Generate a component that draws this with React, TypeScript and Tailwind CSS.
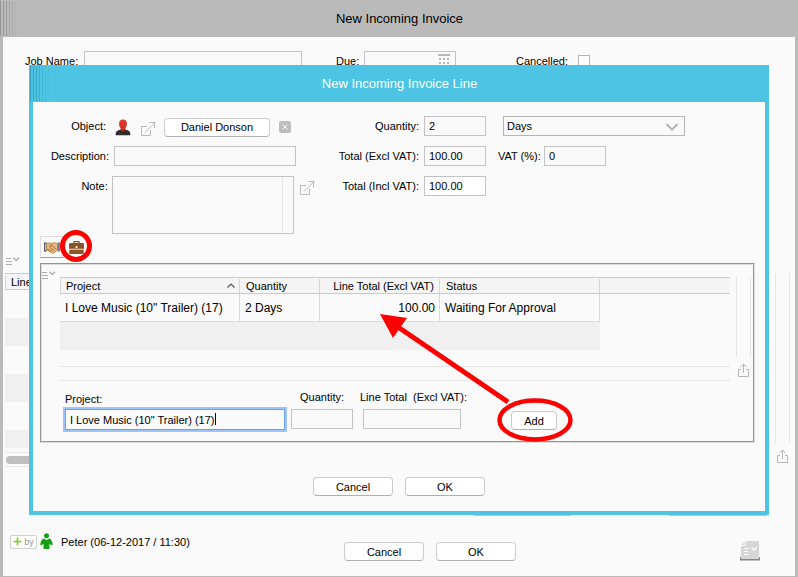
import { ReactNode } from "react";

type IconProps = {
  className?: string;
};

type ColumnProps = {
  id: string;
  label: string;
  className: string;
  children: ReactNode;
};

const field =
  "h-5 border border-[#c3c3c3] bg-[#fafafa] px-1 text-[11px] leading-4 outline-none";

const macButton =
  "h-[19px] rounded border border-[#cbcbcb] border-b-[#b0b0b0] bg-white text-center text-[11px] leading-4";

const headCell =
  "h-[17px] border-y border-[#cacaca] bg-[#f5f5f5] p-0 font-normal leading-[14px]";

const bodyCell = "border-r border-b border-[#dadada] p-0";

const GripLines = ({ color }: { color: string }) => {
  const opacities = [
    "opacity-100",
    "opacity-90",
    "opacity-80",
    "opacity-60",
    "opacity-40",
    "opacity-20",
    "opacity-10",
  ];

  return (
    <div className="absolute top-px left-0 flex h-[35px] gap-0.5">
      {opacities.map((opacity) => (
        <span key={opacity} className={`w-px ${color} ${opacity}`} />
      ))}
    </div>
  );
};

const ListMenuIcon = () => (
  <svg width="14" height="9" viewBox="0 0 14 9" fill="none" stroke="#adadad">
    <path d="M0 1.500h5M0 4.500h6M0 7.500h6" />
    <path d="M7.500 .7L10.300 3.500 13.100 .7" strokeWidth="1.400" />
  </svg>
);

const ShareIcon = () => (
  <svg width="12" height="15" viewBox="0 0 12 15" fill="none" stroke="#b5b5b5">
    <path d="M3 6.500H.5v7h10v-7H8" />
    <path d="M5.500 10V1M2.500 4l3-3 3 3" />
  </svg>
);

const OpenIcon = ({ className }: IconProps) => (
  <svg
    className={className}
    width="15"
    height="15"
    viewBox="0 0 15 15"
    fill="none"
    stroke="#b9b9b9"
  >
    <path d="M6 4.500H.5v9h9V8" />
    <path d="M4 10.500L14 .5M8.500 .5H14.500M13.500 .5v6" />
  </svg>
);

const ContactIcon = () => (
  <svg width="16" height="17" viewBox="0 0 16 17">
    <path
      d="M.7 16.200c-.3-3 .8-4.700 4.800-5.700h5c4 1 5.100 2.700 4.800 5.700z"
      fill="#2e2e2e"
    />
    <path d="M5.800 9h4.400v2.200L8 12.800l-2.200-1.600z" fill="#b5221a" />
    <path
      d="M8 .4c2.700 0 4.100 1.700 4 4.300-.1 2.800-1.700 5.700-4 5.700S4.100 7.500 4 4.700C3.900 2.100 5.300.4 8 .4z"
      fill="#dc3a2c"
    />
    <path d="M5.600 5h1.500M8.900 5h1.500M7 8h2" stroke="#9c2018" strokeWidth=".8" />
  </svg>
);

const HandshakeIcon = () => (
  <svg width="16" height="13" viewBox="0 0 16 13">
    <path d="M0 1.500h2.500v9H0z" fill="#30364a" />
    <path d="M.8 2.500h1v7h-1z" fill="#dfe4ee" />
    <path d="M13.500 1.500H16v9h-2.500z" fill="#7b7f8c" />
    <path
      d="M2.500 2.500L5.500 1.800l2.300.8 2.500-1 3.200 1v6.200l-2.800 2.600-2 .8-3.400-1.700-2.800-1.700z"
      fill="#e7b77b"
      stroke="#a8743d"
      strokeWidth=".7"
    />
    <path
      d="M8 2.800L5.300 5.500c1.200 1 2.400.3 3.200-.7l4 3.700M7.500 7l2.800 3M5.500 7.800l2.500 2.700M3.500 8l2 2"
      fill="none"
      stroke="#99632e"
      strokeWidth=".8"
    />
  </svg>
);

const BriefcaseIcon = () => (
  <svg width="15" height="13" viewBox="0 0 15 13">
    <path d="M5 2.500V.7h5v1.800" fill="none" stroke="#8a5426" strokeWidth="1.200" />
    <path d="M1 2h13l1 1v4.800H0V3z" fill="#8a5426" />
    <path d="M.3 8.600h14.400V13H.3z" fill="#8a5426" />
    <path d="M6.500 5.300h2v1.700h-2z" fill="#fff" />
  </svg>
);

const UserIcon = () => (
  <svg width="13" height="17" viewBox="0 0 13 17" fill="#16a016">
    <circle cx="6.500" cy="2.800" r="2.500" />
    <path d="M3.500 5.500L6.500 7l3-1.500c1.800.6 2.800 3.300 3.400 6.300l-1.500.5-1.900-1.500V16h-6v-5.200l-1.900 1.500-1.500-.5c.6-3 1.600-5.700 3.400-6.300z" />
  </svg>
);

const CalendarIcon = ({ className }: IconProps) => (
  <svg className={className} width="12" height="11" viewBox="0 0 12 11" fill="#b9b9b9">
    <path d="M0 0h12v2H0zM1 4h2v2H1zM5 4h2v2H5zM9 4h2v2H9zM1 8h2v2H1zM5 8h2v2H5zM9 8h2v2H9z" />
  </svg>
);

const ReportIcon = () => (
  <svg width="20" height="20" viewBox="0 0 20 20" fill="none">
    <path d="M6 0h13v18H1V5h5z" fill="#d6d6d6" />
    <path d="M1.500 4L5 .5V4z" fill="#d6d6d6" />
    <path d="M0 16v3.500h20V16h-1v2H1v-2z" fill="#858585" />
    <path d="M4 7.500h5M4 10.500h4M4 13.500h5" stroke="#fff" />
    <path d="M11.500 6.500l2.500 2.500 2.500-2.500" stroke="#fff" strokeWidth="1.500" />
  </svg>
);

const LineColumn = ({ id, label, className, children }: ColumnProps) => (
  <div className={`flex flex-col gap-1 self-start ${className}`}>
    <label htmlFor={id} className="h-3.5 leading-3 whitespace-pre">
      {label}
    </label>
    {children}
  </div>
);

const LinesTable = () => (
  <table className="w-full table-fixed border-separate border-spacing-0 text-left">
    <colgroup>
      <col className="w-[180px]" />
      <col className="w-20" />
      <col className="w-[120px]" />
      <col className="w-40" />
      <col />
    </colgroup>
    <thead>
      <tr>
        <th className={headCell}>
          <div className="flex items-center justify-between border-x border-[#d6d6d6] pr-1 pl-[5px]">
            Project
            <svg width="8" height="5" viewBox="0 0 8 5" fill="none" stroke="#555">
              <path d="M.5 4.500L4 1l3.500 3.500" strokeWidth="1.200" />
            </svg>
          </div>
        </th>
        <th className={headCell}>
          <div className="border-r border-[#d6d6d6] pl-1.5">Quantity</div>
        </th>
        <th className={headCell}>
          <div className="border-r border-[#d6d6d6] pr-[5px] text-right whitespace-nowrap">
            Line Total (Excl VAT)
          </div>
        </th>
        <th className={headCell}>
          <div className="border-r border-[#d6d6d6] pl-1.5">Status</div>
        </th>
        <td className={headCell} />
      </tr>
    </thead>
    <tbody>
      <tr className="h-7 text-xs">
        <td className={`${bodyCell} pl-[5px] whitespace-nowrap`}>
          I Love Music (10&quot; Trailer) (17)
        </td>
        <td className={`${bodyCell} pl-[5px]`}>2 Days</td>
        <td className={`${bodyCell} pr-1 text-right`}>100.00</td>
        <td className={`${bodyCell} pl-[5px]`}>Waiting For Approval</td>
        <td />
      </tr>
      <tr className="h-7">
        <td colSpan={4} className="bg-[#f0f0f0]" />
        <td />
      </tr>
    </tbody>
  </table>
);

const LinesPanel = () => (
  <div className="relative mt-[5px] mr-2.5 ml-[7px] border border-t-[#959595] border-r-[#dedede] border-b-[#dedede] border-l-[#959595]">
    <div className="flex border border-t-[#dedede] border-r-[#959595] border-b-[#959595] border-l-[#dedede] pb-[11px]">
      <button aria-label="List options" className="mt-1.5 flex w-[18px] self-start">
        <ListMenuIcon />
      </button>
      <div className="min-w-0 flex-1 pt-3">
        <LinesTable />
        <div className="mt-4 h-[15px] border-y border-[#e6e6e6]" />
        <div className="mt-2.5 flex items-end pl-[5px]">
          <div className="flex flex-col gap-1">
            <label htmlFor="project" className="h-3.5 leading-4">
              Project:
            </label>
            <div className="relative">
              <input
                id="project"
                defaultValue={'I Love Music (10" Trailer) (17)'}
                className="block h-[21px] w-[220px] border border-[#6fa3e0] bg-[#fafafa] px-1 text-[11px] ring-2 ring-[#9cc6fa] outline-none"
              />
              <span className="absolute top-1 left-[150px] h-3 w-px bg-black" />
            </div>
          </div>
          <LineColumn
            id="line-quantity"
            label="Quantity:"
            className="ml-1.5 w-[62px] items-center"
          >
            <input id="line-quantity" className={`${field} w-full`} />
          </LineColumn>
          <LineColumn
            id="line-total"
            label="Line Total  (Excl VAT):"
            className="ml-[7px] w-[104px]"
          >
            <input id="line-total" className={`${field} w-[98px] self-center`} />
          </LineColumn>
          <div className="relative ml-[47px]">
            <button className={`${macButton} block w-[46px]`}>Add</button>
            <svg
              className="pointer-events-none absolute -top-[13px] -left-3.5"
              width="76"
              height="44"
              viewBox="0 0 76 44"
              fill="none"
              stroke="#fe0000"
              strokeWidth="4.500"
            >
              <ellipse cx="38" cy="22" rx="35.500" ry="19.500" />
            </svg>
          </div>
        </div>
      </div>
      <div className="mt-3 mr-0.5 ml-1.5 flex w-[15px] flex-col items-center gap-1.5">
        <div className="h-20 w-full border-x border-[#e6e6e6]" />
        <button aria-label="Export lines">
          <ShareIcon />
        </button>
      </div>
    </div>
    <svg
      className="pointer-events-none absolute top-[50px] left-[339px]"
      width="132"
      height="92"
      viewBox="0 0 132 92"
    >
      <path d="M18 13L128 88" stroke="#fe0000" strokeWidth="5" />
      <path d="M0 0l27 4-14 20z" fill="#fe0000" />
    </svg>
  </div>
);

const InvoiceLineForm = () => (
  <div className="flex gap-[15px] pt-3.5">
    <div className="flex w-[282px] flex-col gap-2">
      <div className="flex h-[22px] items-center">
        <span className="w-[73px] pb-0.5 text-right">Object:</span>
        <span className="ml-[9px]">
          <ContactIcon />
        </span>
        <button aria-label="Open object" className="ml-2.5">
          <OpenIcon className="mt-1" />
        </button>
        <button className={`${macButton} ml-2 w-[106px]`}>Daniel Donson</button>
        <button
          aria-label="Clear object"
          className="ml-[9px] flex size-3 items-center justify-center rounded-xs bg-[#bdbdbd]"
        >
          <svg width="6" height="6" viewBox="0 0 6 6" stroke="#fff">
            <path d="M.5 .5l5 5M5.500 .5l-5 5" />
          </svg>
        </button>
      </div>
      <div className="flex items-center gap-[5px]">
        <label htmlFor="description" className="w-[76px] text-right">
          Description:
        </label>
        <input id="description" className={`${field} w-[182px]`} />
      </div>
      <div className="mt-0.5 flex gap-1">
        <label htmlFor="note" className="w-[75px] pt-0.5 text-right">
          Note:
        </label>
        <div className="flex h-[58px] w-[183px] border border-[#c3c3c3] pr-2.5">
          <textarea
            id="note"
            className="w-full resize-none border-r border-[#e6e6e6] px-1 text-[11px] outline-none"
          />
        </div>
        <button aria-label="Expand note" className="mt-[5px] ml-0.5 self-start">
          <OpenIcon />
        </button>
      </div>
    </div>
    <div className="flex flex-col gap-2.5">
      <div className="flex items-center gap-[5px]">
        <label htmlFor="quantity" className="w-[89px] text-right">
          Quantity:
        </label>
        <input id="quantity" defaultValue="2" className={`${field} w-[62px]`} />
        <div className="relative ml-3">
          <select
            aria-label="Unit"
            className="block h-5 w-[182px] appearance-none border border-[#b5b5b5] px-[3px] text-[11px] leading-4"
          >
            <option>Days</option>
          </select>
          <svg
            className="pointer-events-none absolute top-[7px] right-[7px]"
            width="12"
            height="8"
            viewBox="0 0 12 8"
            fill="none"
            stroke="#b5b5b5"
            strokeWidth="2"
          >
            <path d="M.5 1L6 6.500 11.500 1" />
          </svg>
        </div>
      </div>
      <div className="flex items-center gap-[5px]">
        <label htmlFor="total-excl" className="w-[89px] text-right">
          Total (Excl VAT):
        </label>
        <input id="total-excl" defaultValue="100.00" className={`${field} w-[62px]`} />
        <label htmlFor="vat" className="ml-[7px] w-[41px] whitespace-nowrap">
          VAT (%):
        </label>
        <input id="vat" defaultValue="0" className={`${field} w-[62px]`} />
      </div>
      <div className="flex items-center gap-[5px]">
        <label htmlFor="total-incl" className="w-[89px] text-right">
          Total (Incl VAT):
        </label>
        <input
          id="total-incl"
          defaultValue="100.00"
          className="h-5 w-[62px] border border-[#c3c3c3] bg-white px-1 text-[11px] leading-4 outline-none"
        />
      </div>
    </div>
  </div>
);

const InvoiceLineDialog = () => (
  <section
    role="dialog"
    aria-labelledby="line-title"
    className="absolute inset-x-[29px] top-[65px] bg-[#4dc4e3] pb-1"
  >
    <header className="relative flex h-[37px] items-center justify-center pl-px">
      <GripLines color="ml-px bg-[#359fbb] -mr-px" />
      <h2 id="line-title" className="text-[13px] text-white">
        New Incoming Invoice Line
      </h2>
    </header>
    <div className="mx-1 bg-[#fafafa] pb-[15px]">
      <InvoiceLineForm />
      <div className="mt-0.5 ml-[7px] flex h-[22px]">
        <button
          aria-label="Contracts"
          className="flex w-6 items-center border border-[#dedede] border-b-[#a0a0a0] pl-[3px]"
        >
          <HandshakeIcon />
        </button>
        <button
          aria-label="Projects"
          className="relative flex w-6 items-center pl-[5px]"
        >
          <BriefcaseIcon />
          <svg
            className="pointer-events-none absolute -top-1.5 -left-1 z-10"
            width="32"
            height="32"
            viewBox="0 0 32 32"
            fill="none"
            stroke="#fe0000"
            strokeWidth="5"
          >
            <circle cx="16" cy="16" r="13.500" />
          </svg>
        </button>
      </div>
      <LinesPanel />
      <div className="mt-[34px] flex justify-center gap-3">
        <button className={`${macButton} w-20`}>Cancel</button>
        <button className={`${macButton} w-20`}>OK</button>
      </div>
    </div>
  </section>
);

const InvoiceLines = () => (
  <div className="mt-[185px] flex pr-[5px] pl-0.5">
    <div className="flex-1">
      <button
        aria-label="Invoice list options"
        className="flex h-4 items-start pl-px"
      >
        <ListMenuIcon />
      </button>
      <table className="w-full border-separate border-spacing-0 text-left">
        <thead>
          <tr>
            <th className={headCell}>
              <div className="border-l border-[#d6d6d6] pl-[5px]">Line</div>
            </th>
          </tr>
        </thead>
        <tbody>
          <tr className="h-7">
            <td />
          </tr>
          <tr className="h-7 bg-[#f0f0f0]">
            <td />
          </tr>
          <tr className="h-7">
            <td />
          </tr>
          <tr className="h-7 bg-[#f0f0f0]">
            <td />
          </tr>
          <tr className="h-7">
            <td />
          </tr>
          <tr className="h-[18px] bg-[#f0f0f0]">
            <td />
          </tr>
        </tbody>
      </table>
      <div className="mt-1 flex h-[15px] items-center border-y border-[#e6e6e6] pl-px">
        <div className="h-2 w-3/5 rounded-full bg-[#bfbfbf]" />
      </div>
    </div>
    <div className="ml-[5px] flex w-[15px] flex-col items-center gap-1.5 pt-4">
      <div className="h-[170px] w-full border-x border-[#e6e6e6]" />
      <button aria-label="Export invoice">
        <ShareIcon />
      </button>
    </div>
  </div>
);

const App = () => {
  return (
    <main className="relative bg-[#bababa] pb-px font-['Liberation_Sans',Arial,sans-serif] text-[11px] leading-4 text-black">
      <header className="relative flex h-[37px] items-center justify-center pl-px">
        <GripLines color="bg-[#949494]" />
        <h1 className="text-[13px]">New Incoming Invoice</h1>
      </header>
      <div className="mx-[3px] bg-[#fafafa] pt-[13px] pb-[15px]">
        <div className="flex h-[22px] items-center pl-[22px]">
          <label htmlFor="job-name" className="w-[59px] whitespace-nowrap">
            Job Name:
          </label>
          <input id="job-name" className={`${field} w-[218px]`} />
          <label htmlFor="due" className="ml-[34px] w-7">
            Due:
          </label>
          <div className="relative">
            <input id="due" className={`${field} block w-[92px]`} />
            <CalendarIcon className="pointer-events-none absolute top-[3px] right-1.5" />
          </div>
          <label htmlFor="cancelled" className="ml-[60px] w-[62px]">
            Cancelled:
          </label>
          <input
            id="cancelled"
            type="checkbox"
            className="size-3 appearance-none border border-[#b5b5b5] bg-white"
          />
        </div>
        <InvoiceLines />
        <div className="mt-[29px] flex justify-end gap-[98px] pr-7">
          <input aria-label="Invoice total" className={`${field} w-[97px]`} />
          <input aria-label="Remaining total" className={`${field} w-[98px]`} />
        </div>
        <footer className="mt-[17px] flex items-end pr-[35px] pl-[7px]">
          <div className="flex w-[334px] items-center self-start">
            <button className="flex h-3.5 w-[27px] items-center justify-center gap-0.5 rounded-xs border border-[#cfcfcf] bg-white text-[9px] leading-3 text-[#999]">
              <svg width="9" height="9" viewBox="0 0 9 9" stroke="#7ed321">
                <path d="M4.500 .5v8M.5 4.500h8" strokeWidth="1.700" />
              </svg>
              by
            </button>
            <span className="ml-[3px]">
              <UserIcon />
            </span>
            <span className="ml-2">Peter (06-12-2017 / 11:30)</span>
          </div>
          <button className={`${macButton} w-20`}>Cancel</button>
          <button className={`${macButton} ml-3 w-20`}>OK</button>
          <button aria-label="Print report" className="ml-auto pt-2">
            <ReportIcon />
          </button>
        </footer>
      </div>
      <InvoiceLineDialog />
    </main>
  );
};

export default App;
